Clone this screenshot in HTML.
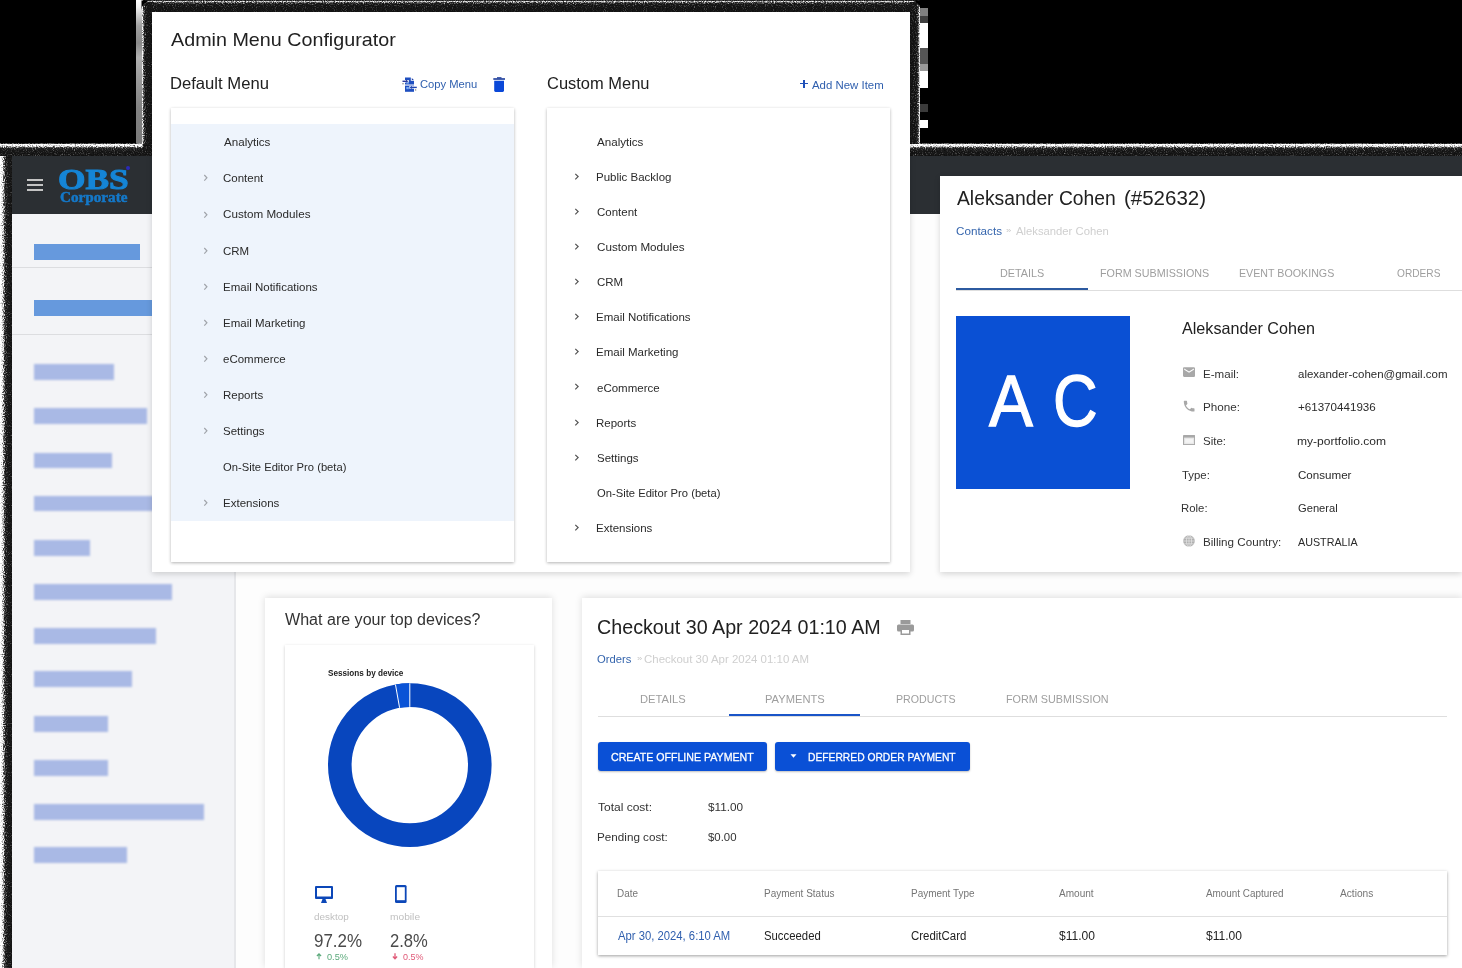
<!DOCTYPE html>
<html><head><meta charset="utf-8"><style>
html,body{margin:0;padding:0;}
body{width:1462px;height:968px;overflow:hidden;background:#000;position:relative;font-family:"Liberation Sans",sans-serif;}
.t{position:absolute;white-space:nowrap;transform-origin:0 0;}
.b{position:absolute;}
</style></head><body>
<div class="b" style="left:12.00px;top:156.00px;width:1450.00px;height:58.00px;background:#2b2f33"></div>
<div class="b" style="left:12.00px;top:214.00px;width:223.00px;height:754.00px;background:#f3f4f7"></div>
<div class="b" style="left:235.00px;top:214.00px;width:1227.00px;height:754.00px;background:#fdfdfd"></div>
<div class="b" style="left:234.00px;top:214.00px;width:2.00px;height:754.00px;background:#e6e7ea"></div>
<div class="b" style="left:26.60px;top:179.30px;width:16.80px;height:1.70px;background:#c4c4c4"></div>
<div class="b" style="left:26.60px;top:184.30px;width:16.80px;height:1.70px;background:#c4c4c4"></div>
<div class="b" style="left:26.60px;top:189.30px;width:16.80px;height:1.70px;background:#c4c4c4"></div>
<div class="t" style="left:57.68px;top:163.02px;font-size:29.361px;line-height:32.802px;color:#1585d6;font-weight:bold;font-family:'Liberation Serif', serif;transform:scaleX(1.2021);-webkit-text-stroke:1.0px #1585d6;">OBS</div>
<div class="t" style="left:59.96px;top:190.03px;font-size:13.663px;line-height:15.264px;color:#1478c8;font-weight:bold;font-family:'Liberation Serif', serif;transform:scaleX(1.1126);-webkit-text-stroke:0.5px #1478c8;">Corporate</div>
<div class="b" style="left:125.50px;top:165.50px;width:4.00px;height:4.00px;background:#2a2ab8;border-radius:50%"></div>
<div class="b" style="left:34.00px;top:244.00px;width:106.00px;height:16.00px;background:#6699dd"></div>
<div class="b" style="left:12.00px;top:267.00px;width:223.00px;height:1.00px;background:#dcdde0"></div>
<div class="b" style="left:34.00px;top:300.00px;width:201.00px;height:16.00px;background:#6699dd"></div>
<div class="b" style="left:12.00px;top:333.50px;width:223.00px;height:1.00px;background:#dcdde0"></div>
<div class="b" style="left:34.00px;top:364.00px;width:80.00px;height:15.50px;background:#a9b9e5;filter:blur(1px)"></div>
<div class="b" style="left:34.00px;top:408.00px;width:113.40px;height:15.50px;background:#a9b9e5;filter:blur(1px)"></div>
<div class="b" style="left:34.00px;top:452.60px;width:77.80px;height:15.50px;background:#a9b9e5;filter:blur(1px)"></div>
<div class="b" style="left:34.00px;top:495.50px;width:166.00px;height:15.50px;background:#a9b9e5;filter:blur(1px)"></div>
<div class="b" style="left:34.00px;top:540.00px;width:56.00px;height:15.50px;background:#a9b9e5;filter:blur(1px)"></div>
<div class="b" style="left:34.00px;top:584.20px;width:138.30px;height:15.50px;background:#a9b9e5;filter:blur(1px)"></div>
<div class="b" style="left:34.00px;top:628.00px;width:122.00px;height:15.50px;background:#a9b9e5;filter:blur(1px)"></div>
<div class="b" style="left:34.00px;top:671.00px;width:97.50px;height:15.50px;background:#a9b9e5;filter:blur(1px)"></div>
<div class="b" style="left:34.00px;top:716.30px;width:74.40px;height:15.50px;background:#a9b9e5;filter:blur(1px)"></div>
<div class="b" style="left:34.00px;top:760.00px;width:74.40px;height:15.50px;background:#a9b9e5;filter:blur(1px)"></div>
<div class="b" style="left:34.00px;top:804.00px;width:169.80px;height:15.50px;background:#a9b9e5;filter:blur(1px)"></div>
<div class="b" style="left:34.00px;top:847.30px;width:93.20px;height:15.50px;background:#a9b9e5;filter:blur(1px)"></div>
<div class="b" style="left:136.00px;top:0.00px;width:6.50px;height:144.00px;background:linear-gradient(#ffffff 0,#f0f0f0 5%,#a0a0a0 18%,#8a8a8a 30%,#b0b0b0 40%,#9a9a9a 55%,#828282 75%,#7a7a7a 100%)"></div>
<div class="b" style="left:920.00px;top:8.00px;width:8.00px;height:8.00px;background:#808080"></div>
<div class="b" style="left:920.00px;top:16.00px;width:8.00px;height:7.00px;background:#404040"></div>
<div class="b" style="left:920.00px;top:23.00px;width:8.00px;height:25.00px;background:#ffffff"></div>
<div class="b" style="left:920.00px;top:48.00px;width:8.00px;height:16.00px;background:#555555"></div>
<div class="b" style="left:920.00px;top:64.00px;width:8.00px;height:7.00px;background:#999999"></div>
<div class="b" style="left:920.00px;top:71.00px;width:8.00px;height:17.00px;background:#ffffff"></div>
<div class="b" style="left:920.00px;top:104.00px;width:8.00px;height:8.00px;background:#3a3a3a"></div>
<div class="b" style="left:920.00px;top:120.00px;width:8.00px;height:8.00px;background:#ffffff"></div>
<svg class="b" style="left:0;top:0" width="1462" height="968"><defs><filter id="dz" x="0" y="0" width="1462" height="968" filterUnits="userSpaceOnUse" color-interpolation-filters="sRGB"><feTurbulence type="fractalNoise" baseFrequency="0.9" numOctaves="1" seed="4" result="n"/><feColorMatrix in="n" type="matrix" values="1 0 0 0 0 1 0 0 0 0 1 0 0 0 0 0 0 0 0 1" result="ng"/><feComposite in="SourceGraphic" in2="ng" operator="arithmetic" k1="0" k2="1" k3="1.2" k4="-0.6" result="s"/><feComponentTransfer in="s" result="t"><feFuncR type="table" tableValues="0.07 0.11 0.3 0.75 1 1"/><feFuncG type="table" tableValues="0.07 0.11 0.3 0.75 1 1"/><feFuncB type="table" tableValues="0.07 0.11 0.3 0.75 1 1"/><feFuncA type="linear" slope="0" intercept="1"/></feComponentTransfer><feComposite in="t" in2="SourceAlpha" operator="in"/></filter><linearGradient id="gd" x1="0" y1="0" x2="0" y2="1"><stop offset="0" stop-color="#d0d0d0"/><stop offset="0.15" stop-color="#707070"/><stop offset="0.32" stop-color="#262626"/><stop offset="0.6" stop-color="#1a1a1a"/><stop offset="1" stop-color="#161616"/></linearGradient><linearGradient id="gr" x1="0" y1="0" x2="1" y2="0"><stop offset="0" stop-color="#d0d0d0"/><stop offset="0.15" stop-color="#707070"/><stop offset="0.32" stop-color="#262626"/><stop offset="0.6" stop-color="#1a1a1a"/><stop offset="1" stop-color="#161616"/></linearGradient><linearGradient id="gl" x1="1" y1="0" x2="0" y2="0"><stop offset="0" stop-color="#d0d0d0"/><stop offset="0.15" stop-color="#707070"/><stop offset="0.32" stop-color="#262626"/><stop offset="0.6" stop-color="#1a1a1a"/><stop offset="1" stop-color="#161616"/></linearGradient><linearGradient id="gd2" x1="0" y1="0" x2="0" y2="1"><stop offset="0" stop-color="#f4f4f4"/><stop offset="0.2" stop-color="#b8b8b8"/><stop offset="0.38" stop-color="#404040"/><stop offset="0.65" stop-color="#202020"/><stop offset="1" stop-color="#1a1a1a"/></linearGradient><linearGradient id="gr2" x1="0" y1="0" x2="1" y2="0"><stop offset="0" stop-color="#f4f4f4"/><stop offset="0.25" stop-color="#a8a8a8"/><stop offset="0.45" stop-color="#404040"/><stop offset="0.7" stop-color="#202020"/><stop offset="1" stop-color="#1a1a1a"/></linearGradient></defs><g filter="url(#dz)"><rect x="0" y="143.5" width="143" height="12.5" fill="url(#gd2)"/><rect x="920" y="143.5" width="542" height="12.5" fill="url(#gd2)"/><rect x="0" y="156" width="12" height="812" fill="url(#gr2)"/><rect x="143" y="0.5" width="777" height="11.5" fill="url(#gd)"/><rect x="142" y="2" width="10" height="142" fill="url(#gr)"/><rect x="910" y="2" width="10" height="142" fill="url(#gl)"/><rect x="143" y="144" width="9" height="12" fill="#1c1c1c"/><rect x="910" y="144" width="10" height="12" fill="url(#gd2)"/></g></svg>
<svg class="b" style="left:0;top:0" width="1462" height="200"><path d="M141.5 0.5H152A10 10 0 0 0 141.5 11z" fill="#000"/><path d="M920.5 0.5V12A10 10 0 0 0 910 0.5z" fill="#000"/></svg>
<div class="b" style="left:152.00px;top:12.00px;width:758.00px;height:560.00px;background:#ffffff;box-shadow:0 2px 6px rgba(0,0,0,0.16)"></div>
<div class="t" style="left:171.16px;top:29.06px;font-size:19.041px;line-height:21.272px;color:#212121;font-weight:normal;font-family:'Liberation Sans', sans-serif;transform:scaleX(1.0364);">Admin Menu Configurator</div>
<div class="t" style="left:169.64px;top:73.96px;font-size:16.279px;line-height:18.187px;color:#212121;font-weight:normal;font-family:'Liberation Sans', sans-serif;transform:scaleX(1.0221);">Default Menu</div>
<div class="t" style="left:420.33px;top:77.79px;font-size:11.163px;line-height:12.471px;color:#2f5fae;font-weight:normal;font-family:'Liberation Sans', sans-serif;transform:scaleX(1.0040);">Copy Menu</div>
<div class="t" style="left:546.96px;top:73.89px;font-size:16.134px;line-height:18.025px;color:#212121;font-weight:normal;font-family:'Liberation Sans', sans-serif;transform:scaleX(1.0209);">Custom Menu</div>
<div class="b" style="left:800.30px;top:82.90px;width:7.40px;height:1.60px;background:#1f50b8"></div>
<div class="b" style="left:803.20px;top:79.50px;width:1.60px;height:8.20px;background:#1f50b8"></div>
<div class="t" style="left:811.98px;top:78.57px;font-size:11.303px;line-height:12.627px;color:#2f5fae;font-weight:normal;font-family:'Liberation Sans', sans-serif;transform:scaleX(1.0112);">Add New Item</div>
<svg class="b" style="left:398px;top:74px" width="24" height="20" viewBox="0 0 24 20"><path d="M7 3.5h5.8v3.3h3.2v3.7h-9z" fill="#1f4fc0"/><path d="M13.8 3.9l2 2h-2z" fill="#1f3fa8"/><path d="M7 11.6h9v6.2h-9z" fill="#1f4fc0"/><path d="M4 7.3h6.8" stroke="#ffffff" stroke-width="2.6"/><path d="M4.5 7.3h4" stroke="#2a3a9a" stroke-width="1.4"/><path d="M8 5.6l2.3 1.7-2.3 1.7z" fill="#2a3a9a"/><path d="M11.3 13.4h7.8" stroke="#ffffff" stroke-width="2.6"/><path d="M13.2 13.4h5.6" stroke="#1f45b0" stroke-width="1.4"/><path d="M13.9 11.7l-2.3 1.7 2.3 1.7z" fill="#1f45b0"/><rect x="8.3" y="8.3" width="2.6" height="1.3" fill="#7aaaf0"/><rect x="8.3" y="13" width="2.5" height="2.2" fill="#7aaaf0"/><circle cx="5" cy="9.7" r="0.7" fill="#555" opacity="0.8"/><circle cx="17.6" cy="15.9" r="0.7" fill="#555" opacity="0.8"/></svg>
<svg class="b" style="left:488px;top:74px" width="24" height="20" viewBox="0 0 24 20"><path d="M5.3 4.2h11.7v1.6h-11.7z" fill="#1a3a9a"/><path d="M9 3.2h4.5v1.2h-4.5z" fill="#1a3a9a"/><path d="M6.2 6.8h9.8v9.8q0 1.3-1.3 1.3h-7.2q-1.3 0-1.3-1.3z" fill="#0a48d8"/></svg>
<div class="b" style="left:171.00px;top:108.00px;width:343.00px;height:454.00px;background:#ffffff;box-shadow:0 1px 3px rgba(0,0,0,0.3)"></div>
<div class="b" style="left:171.00px;top:124.00px;width:343.00px;height:396.50px;background:#eef4fc"></div>
<div class="t" style="left:223.58px;top:136.29px;font-size:11.163px;line-height:12.471px;color:#2a2a2a;font-weight:normal;font-family:'Liberation Sans', sans-serif;transform:scaleX(1.0397);">Analytics</div>
<div class="t" style="left:223.01px;top:208.45px;font-size:11.163px;line-height:12.471px;color:#2a2a2a;font-weight:normal;font-family:'Liberation Sans', sans-serif;transform:scaleX(1.0449);">Custom Modules</div>
<div class="t" style="left:223.07px;top:461.01px;font-size:11.163px;line-height:12.471px;color:#2a2a2a;font-weight:normal;font-family:'Liberation Sans', sans-serif;transform:scaleX(1.0056);">On-Site Editor Pro (beta)</div>
<div class="t" style="left:222.65px;top:497.09px;font-size:11.163px;line-height:12.471px;color:#2a2a2a;font-weight:normal;font-family:'Liberation Sans', sans-serif;transform:scaleX(1.0322);">Extensions</div>
<div class="t" style="left:223.02px;top:172.37px;font-size:11.163px;line-height:12.471px;color:#2a2a2a;font-weight:normal;font-family:'Liberation Sans', sans-serif;transform:scaleX(1.0306);">Content</div>
<svg class="b" style="left:203px;top:174.48px" width="6" height="8" viewBox="0 0 6 8"><path d="M1.3 1l2.6 2.8-2.6 2.8" fill="none" stroke="#a0a4aa" stroke-width="1.2"/></svg>
<svg class="b" style="left:203px;top:210.56px" width="6" height="8" viewBox="0 0 6 8"><path d="M1.3 1l2.6 2.8-2.6 2.8" fill="none" stroke="#a0a4aa" stroke-width="1.2"/></svg>
<div class="t" style="left:223.02px;top:244.53px;font-size:11.163px;line-height:12.471px;color:#2a2a2a;font-weight:normal;font-family:'Liberation Sans', sans-serif;transform:scaleX(1.0306);">CRM</div>
<svg class="b" style="left:203px;top:246.64px" width="6" height="8" viewBox="0 0 6 8"><path d="M1.3 1l2.6 2.8-2.6 2.8" fill="none" stroke="#a0a4aa" stroke-width="1.2"/></svg>
<div class="t" style="left:222.66px;top:280.61px;font-size:11.163px;line-height:12.471px;color:#2a2a2a;font-weight:normal;font-family:'Liberation Sans', sans-serif;transform:scaleX(1.0306);">Email Notifications</div>
<svg class="b" style="left:203px;top:282.72px" width="6" height="8" viewBox="0 0 6 8"><path d="M1.3 1l2.6 2.8-2.6 2.8" fill="none" stroke="#a0a4aa" stroke-width="1.2"/></svg>
<div class="t" style="left:222.66px;top:316.69px;font-size:11.163px;line-height:12.471px;color:#2a2a2a;font-weight:normal;font-family:'Liberation Sans', sans-serif;transform:scaleX(1.0306);">Email Marketing</div>
<svg class="b" style="left:203px;top:318.80px" width="6" height="8" viewBox="0 0 6 8"><path d="M1.3 1l2.6 2.8-2.6 2.8" fill="none" stroke="#a0a4aa" stroke-width="1.2"/></svg>
<div class="t" style="left:223.11px;top:352.77px;font-size:11.163px;line-height:12.471px;color:#2a2a2a;font-weight:normal;font-family:'Liberation Sans', sans-serif;transform:scaleX(1.0306);">eCommerce</div>
<svg class="b" style="left:203px;top:354.88px" width="6" height="8" viewBox="0 0 6 8"><path d="M1.3 1l2.6 2.8-2.6 2.8" fill="none" stroke="#a0a4aa" stroke-width="1.2"/></svg>
<div class="t" style="left:222.66px;top:388.85px;font-size:11.163px;line-height:12.471px;color:#2a2a2a;font-weight:normal;font-family:'Liberation Sans', sans-serif;transform:scaleX(1.0306);">Reports</div>
<svg class="b" style="left:203px;top:390.96px" width="6" height="8" viewBox="0 0 6 8"><path d="M1.3 1l2.6 2.8-2.6 2.8" fill="none" stroke="#a0a4aa" stroke-width="1.2"/></svg>
<div class="t" style="left:223.08px;top:424.93px;font-size:11.163px;line-height:12.471px;color:#2a2a2a;font-weight:normal;font-family:'Liberation Sans', sans-serif;transform:scaleX(1.0306);">Settings</div>
<svg class="b" style="left:203px;top:427.04px" width="6" height="8" viewBox="0 0 6 8"><path d="M1.3 1l2.6 2.8-2.6 2.8" fill="none" stroke="#a0a4aa" stroke-width="1.2"/></svg>
<svg class="b" style="left:203px;top:499.20px" width="6" height="8" viewBox="0 0 6 8"><path d="M1.3 1l2.6 2.8-2.6 2.8" fill="none" stroke="#a0a4aa" stroke-width="1.2"/></svg>
<div class="b" style="left:547.00px;top:108.00px;width:343.00px;height:454.00px;background:#ffffff;box-shadow:0 1px 3px rgba(0,0,0,0.3)"></div>
<div class="t" style="left:597.28px;top:135.59px;font-size:11.163px;line-height:12.471px;color:#2a2a2a;font-weight:normal;font-family:'Liberation Sans', sans-serif;transform:scaleX(1.0397);">Analytics</div>
<div class="t" style="left:596.36px;top:170.73px;font-size:11.163px;line-height:12.471px;color:#2a2a2a;font-weight:normal;font-family:'Liberation Sans', sans-serif;transform:scaleX(1.0306);">Public Backlog</div>
<svg class="b" style="left:574px;top:172.64px" width="6" height="8" viewBox="0 0 6 8"><path d="M1.3 0.9l2.8 2.7-2.8 2.8" fill="none" stroke="#555" stroke-width="1.25"/></svg>
<div class="t" style="left:596.72px;top:205.87px;font-size:11.163px;line-height:12.471px;color:#2a2a2a;font-weight:normal;font-family:'Liberation Sans', sans-serif;transform:scaleX(1.0306);">Content</div>
<svg class="b" style="left:574px;top:207.78px" width="6" height="8" viewBox="0 0 6 8"><path d="M1.3 0.9l2.8 2.7-2.8 2.8" fill="none" stroke="#555" stroke-width="1.25"/></svg>
<div class="t" style="left:596.71px;top:241.01px;font-size:11.163px;line-height:12.471px;color:#2a2a2a;font-weight:normal;font-family:'Liberation Sans', sans-serif;transform:scaleX(1.0449);">Custom Modules</div>
<svg class="b" style="left:574px;top:242.92px" width="6" height="8" viewBox="0 0 6 8"><path d="M1.3 0.9l2.8 2.7-2.8 2.8" fill="none" stroke="#555" stroke-width="1.25"/></svg>
<div class="t" style="left:596.72px;top:276.15px;font-size:11.163px;line-height:12.471px;color:#2a2a2a;font-weight:normal;font-family:'Liberation Sans', sans-serif;transform:scaleX(1.0306);">CRM</div>
<svg class="b" style="left:574px;top:278.06px" width="6" height="8" viewBox="0 0 6 8"><path d="M1.3 0.9l2.8 2.7-2.8 2.8" fill="none" stroke="#555" stroke-width="1.25"/></svg>
<div class="t" style="left:596.36px;top:311.29px;font-size:11.163px;line-height:12.471px;color:#2a2a2a;font-weight:normal;font-family:'Liberation Sans', sans-serif;transform:scaleX(1.0306);">Email Notifications</div>
<svg class="b" style="left:574px;top:313.20px" width="6" height="8" viewBox="0 0 6 8"><path d="M1.3 0.9l2.8 2.7-2.8 2.8" fill="none" stroke="#555" stroke-width="1.25"/></svg>
<div class="t" style="left:596.36px;top:346.43px;font-size:11.163px;line-height:12.471px;color:#2a2a2a;font-weight:normal;font-family:'Liberation Sans', sans-serif;transform:scaleX(1.0306);">Email Marketing</div>
<svg class="b" style="left:574px;top:348.34px" width="6" height="8" viewBox="0 0 6 8"><path d="M1.3 0.9l2.8 2.7-2.8 2.8" fill="none" stroke="#555" stroke-width="1.25"/></svg>
<div class="t" style="left:596.81px;top:381.57px;font-size:11.163px;line-height:12.471px;color:#2a2a2a;font-weight:normal;font-family:'Liberation Sans', sans-serif;transform:scaleX(1.0306);">eCommerce</div>
<svg class="b" style="left:574px;top:383.48px" width="6" height="8" viewBox="0 0 6 8"><path d="M1.3 0.9l2.8 2.7-2.8 2.8" fill="none" stroke="#555" stroke-width="1.25"/></svg>
<div class="t" style="left:596.36px;top:416.71px;font-size:11.163px;line-height:12.471px;color:#2a2a2a;font-weight:normal;font-family:'Liberation Sans', sans-serif;transform:scaleX(1.0306);">Reports</div>
<svg class="b" style="left:574px;top:418.62px" width="6" height="8" viewBox="0 0 6 8"><path d="M1.3 0.9l2.8 2.7-2.8 2.8" fill="none" stroke="#555" stroke-width="1.25"/></svg>
<div class="t" style="left:596.78px;top:451.85px;font-size:11.163px;line-height:12.471px;color:#2a2a2a;font-weight:normal;font-family:'Liberation Sans', sans-serif;transform:scaleX(1.0306);">Settings</div>
<svg class="b" style="left:574px;top:453.76px" width="6" height="8" viewBox="0 0 6 8"><path d="M1.3 0.9l2.8 2.7-2.8 2.8" fill="none" stroke="#555" stroke-width="1.25"/></svg>
<div class="t" style="left:596.77px;top:486.99px;font-size:11.163px;line-height:12.471px;color:#2a2a2a;font-weight:normal;font-family:'Liberation Sans', sans-serif;transform:scaleX(1.0056);">On-Site Editor Pro (beta)</div>
<div class="t" style="left:596.35px;top:522.13px;font-size:11.163px;line-height:12.471px;color:#2a2a2a;font-weight:normal;font-family:'Liberation Sans', sans-serif;transform:scaleX(1.0322);">Extensions</div>
<svg class="b" style="left:574px;top:524.04px" width="6" height="8" viewBox="0 0 6 8"><path d="M1.3 0.9l2.8 2.7-2.8 2.8" fill="none" stroke="#555" stroke-width="1.25"/></svg>
<div class="b" style="left:940.00px;top:176.00px;width:522.00px;height:396.00px;background:#ffffff;box-shadow:0 2px 6px rgba(0,0,0,0.16)"></div>
<div class="t" style="left:956.96px;top:188.40px;font-size:19.332px;line-height:21.597px;color:#212121;font-weight:normal;font-family:'Liberation Sans', sans-serif;transform:scaleX(0.9983);">Aleksander Cohen</div>
<div class="t" style="left:1123.73px;top:188.40px;font-size:19.332px;line-height:21.597px;color:#212121;font-weight:normal;font-family:'Liberation Sans', sans-serif;transform:scaleX(1.0602);">(#52632)</div>
<div class="t" style="left:956.41px;top:224.97px;font-size:11.303px;line-height:12.627px;color:#3565ad;font-weight:normal;font-family:'Liberation Sans', sans-serif;transform:scaleX(1.0316);">Contacts</div>
<div class="t" style="left:1006.12px;top:226.58px;font-size:6.977px;line-height:7.794px;color:#c8c8c8;font-weight:normal;font-family:'Liberation Sans', sans-serif;transform:scaleX(1.3576);">»</div>
<div class="t" style="left:1015.98px;top:224.97px;font-size:11.303px;line-height:12.627px;color:#cfcfcf;font-weight:normal;font-family:'Liberation Sans', sans-serif;transform:scaleX(0.9974);">Aleksander Cohen</div>
<div class="t" style="left:999.81px;top:267.70px;font-size:10.605px;line-height:11.848px;color:#9e9e9e;font-weight:normal;font-family:'Liberation Sans', sans-serif;transform:scaleX(1.0224);">DETAILS</div>
<div class="t" style="left:1100.02px;top:267.70px;font-size:10.605px;line-height:11.848px;color:#9e9e9e;font-weight:normal;font-family:'Liberation Sans', sans-serif;transform:scaleX(1.0144);">FORM SUBMISSIONS</div>
<div class="t" style="left:1239.42px;top:267.70px;font-size:10.605px;line-height:11.848px;color:#9e9e9e;font-weight:normal;font-family:'Liberation Sans', sans-serif;transform:scaleX(1.0072);">EVENT BOOKINGS</div>
<div class="t" style="left:1397.12px;top:267.70px;font-size:10.605px;line-height:11.848px;color:#9e9e9e;font-weight:normal;font-family:'Liberation Sans', sans-serif;transform:scaleX(0.9576);">ORDERS</div>
<div class="b" style="left:956.00px;top:289.50px;width:506.00px;height:1.00px;background:#dedede"></div>
<div class="b" style="left:956.00px;top:287.50px;width:132.00px;height:2.00px;background:#2c5aa0"></div>
<div class="b" style="left:956.00px;top:316.00px;width:174.00px;height:173.00px;background:#0a50d4"></div>
<div class="t" style="left:989.07px;top:360.01px;font-size:73.112px;line-height:81.679px;color:#ffffff;font-weight:normal;font-family:'Liberation Sans', sans-serif;transform:scaleX(0.8993);-webkit-text-stroke:1.3px #ffffff;">A</div>
<div class="t" style="left:1053.16px;top:360.01px;font-size:73.112px;line-height:81.679px;color:#ffffff;font-weight:normal;font-family:'Liberation Sans', sans-serif;transform:scaleX(0.8445);-webkit-text-stroke:1.3px #ffffff;">C</div>
<div class="t" style="left:1182.37px;top:318.86px;font-size:16.279px;line-height:18.187px;color:#212121;font-weight:normal;font-family:'Liberation Sans', sans-serif;transform:scaleX(0.9936);">Aleksander Cohen</div>
<div class="t" style="left:1202.55px;top:367.79px;font-size:11.163px;line-height:12.471px;color:#333333;font-weight:normal;font-family:'Liberation Sans', sans-serif;transform:scaleX(1.0367);">E-mail:</div>
<div class="t" style="left:1297.71px;top:367.79px;font-size:11.163px;line-height:12.471px;color:#2a2a2a;font-weight:normal;font-family:'Liberation Sans', sans-serif;transform:scaleX(1.0295);">alexander-cohen@gmail.com</div>
<div class="t" style="left:1202.54px;top:401.45px;font-size:11.163px;line-height:12.471px;color:#333333;font-weight:normal;font-family:'Liberation Sans', sans-serif;transform:scaleX(1.0465);">Phone:</div>
<div class="t" style="left:1297.63px;top:401.45px;font-size:11.163px;line-height:12.471px;color:#2a2a2a;font-weight:normal;font-family:'Liberation Sans', sans-serif;transform:scaleX(1.0396);">+61370441936</div>
<div class="t" style="left:1202.98px;top:435.11px;font-size:11.163px;line-height:12.471px;color:#333333;font-weight:normal;font-family:'Liberation Sans', sans-serif;transform:scaleX(1.0331);">Site:</div>
<div class="t" style="left:1297.40px;top:435.11px;font-size:11.163px;line-height:12.471px;color:#2a2a2a;font-weight:normal;font-family:'Liberation Sans', sans-serif;transform:scaleX(1.0799);">my-portfolio.com</div>
<div class="t" style="left:1182.14px;top:468.77px;font-size:11.163px;line-height:12.471px;color:#333333;font-weight:normal;font-family:'Liberation Sans', sans-serif;transform:scaleX(1.0218);">Type:</div>
<div class="t" style="left:1297.61px;top:468.77px;font-size:11.163px;line-height:12.471px;color:#2a2a2a;font-weight:normal;font-family:'Liberation Sans', sans-serif;transform:scaleX(1.0386);">Consumer</div>
<div class="t" style="left:1181.47px;top:502.43px;font-size:11.163px;line-height:12.471px;color:#333333;font-weight:normal;font-family:'Liberation Sans', sans-serif;transform:scaleX(1.0197);">Role:</div>
<div class="t" style="left:1297.64px;top:502.43px;font-size:11.163px;line-height:12.471px;color:#2a2a2a;font-weight:normal;font-family:'Liberation Sans', sans-serif;transform:scaleX(0.9999);">General</div>
<div class="t" style="left:1202.54px;top:536.09px;font-size:11.163px;line-height:12.471px;color:#333333;font-weight:normal;font-family:'Liberation Sans', sans-serif;transform:scaleX(1.0432);">Billing Country:</div>
<div class="t" style="left:1298.18px;top:536.09px;font-size:11.163px;line-height:12.471px;color:#2a2a2a;font-weight:normal;font-family:'Liberation Sans', sans-serif;transform:scaleX(0.9630);">AUSTRALIA</div>
<svg class="b" style="left:1183.1px;top:367px" width="12.1" height="10.2" viewBox="2 4 20 16"><path fill="#a8a8a8" d="M20 4H4c-1.1 0-2 .9-2 2v12c0 1.1.9 2 2 2h16c1.1 0 2-.9 2-2V6c0-1.1-.9-2-2-2zm0 4l-8 5-8-5V6l8 5 8-5v2z"/></svg>
<svg class="b" style="left:1182.2px;top:398.7px" width="14.3" height="14.3" viewBox="0 0 24 24"><path fill="#a8a8a8" d="M6.62 10.79c1.44 2.83 3.76 5.14 6.59 6.59l2.2-2.2c.27-.27.67-.36 1.02-.24 1.12.37 2.33.57 3.57.57.55 0 1 .45 1 1V20c0 .55-.45 1-1 1-9.39 0-17-7.61-17-17 0-.55.45-1 1-1h3.5c.55 0 1 .45 1 1 0 1.25.2 2.45.57 3.57.11.35.03.74-.25 1.02l-2.2 2.2z"/></svg>
<svg class="b" style="left:1183px;top:435px" width="12.2" height="10.2" viewBox="0 0 12.2 10.2"><rect x="0" y="0" width="12.2" height="10.2" rx="0.8" fill="#a8a8a8"/><rect x="1.1" y="2.6" width="10" height="6.5" fill="#e8e8e8"/><rect x="2.2" y="4" width="7.8" height="3.8" fill="#f4f4f4"/></svg>
<svg class="b" style="left:1183px;top:535.4px" width="12" height="12" viewBox="0 0 12 12"><circle cx="6" cy="6" r="5.8" fill="#b0b0b0"/><path d="M0.3 6h11.4M6 0.3v11.4M1.3 3.2h9.4M1.3 8.8h9.4" stroke="#eeeeee" stroke-width="0.6" fill="none"/><ellipse cx="6" cy="6" rx="2.6" ry="5.8" fill="none" stroke="#eeeeee" stroke-width="0.6"/></svg>
<div class="b" style="left:265.00px;top:598.00px;width:287.00px;height:370.00px;background:#ffffff;box-shadow:0 -1px 7px rgba(0,0,0,0.13)"></div>
<div class="t" style="left:285.23px;top:610.96px;font-size:15.843px;line-height:17.700px;color:#333333;font-weight:normal;font-family:'Liberation Sans', sans-serif;transform:scaleX(1.0146);">What are your top devices?</div>
<div class="b" style="left:285.00px;top:645.00px;width:249.00px;height:323.00px;background:#ffffff;box-shadow:0 1px 3px rgba(0,0,0,0.2)"></div>
<div class="t" style="left:327.66px;top:667.54px;font-size:9.012px;line-height:10.068px;color:#222222;font-weight:bold;font-family:'Liberation Sans', sans-serif;transform:scaleX(0.9082);">Sessions by device</div>
<svg class="b" style="left:0;top:0" width="1462" height="968"><circle cx="409.80" cy="765.10" r="70.00" fill="none" stroke="#0846be" stroke-width="23.60"/><path d="M395.46 684.57 A81.80 81.80 0 0 1 409.80 683.30 L409.80 706.90 A58.20 58.20 0 0 0 399.59 707.80 Z" fill="#0a53d6"/><line x1="409.80" y1="683.30" x2="409.80" y2="706.90" stroke="#fff" stroke-width="1"/><line x1="395.46" y1="684.57" x2="399.59" y2="707.80" stroke="#fff" stroke-width="1"/></svg>
<svg class="b" style="left:315px;top:886px" width="18" height="17" viewBox="0 0 18 17"><rect x="0" y="0" width="18" height="13" rx="1" fill="#0c47b8"/><rect x="2" y="2" width="14" height="8.5" fill="#ffffff"/><path d="M6 17l1.5-4h3l1.5 4z" fill="#0c47b8"/></svg>
<svg class="b" style="left:394.6px;top:885.4px" width="12" height="18" viewBox="0 0 12 18"><rect x="0" y="0" width="11.6" height="18" rx="1.5" fill="#0c47b8"/><rect x="1.8" y="2.2" width="8" height="13" fill="#ffffff"/></svg>
<div class="t" style="left:314.48px;top:912.36px;font-size:9.209px;line-height:10.289px;color:#c0c0c0;font-weight:normal;font-family:'Liberation Sans', sans-serif;transform:scaleX(1.0800);">desktop</div>
<div class="t" style="left:390.12px;top:912.36px;font-size:9.209px;line-height:10.289px;color:#c0c0c0;font-weight:normal;font-family:'Liberation Sans', sans-serif;transform:scaleX(1.1107);">mobile</div>
<div class="t" style="left:314.10px;top:931.18px;font-size:18.024px;line-height:20.136px;color:#4a4a4a;font-weight:normal;font-family:'Liberation Sans', sans-serif;transform:scaleX(0.9412);">97.2%</div>
<div class="t" style="left:390.47px;top:931.18px;font-size:18.024px;line-height:20.136px;color:#4a4a4a;font-weight:normal;font-family:'Liberation Sans', sans-serif;transform:scaleX(0.9208);">2.8%</div>
<svg class="b" style="left:315.5px;top:953.2px" width="6" height="6.5" viewBox="0 0 6 6.5"><path d="M3 6.3V0.9M0.9 3l2.1-2.2L5.1 3" fill="none" stroke="#5aa97a" stroke-width="1.1"/></svg>
<div class="t" style="left:326.54px;top:951.86px;font-size:9.768px;line-height:10.912px;color:#5aa97a;font-weight:normal;font-family:'Liberation Sans', sans-serif;transform:scaleX(0.9427);">0.5%</div>
<svg class="b" style="left:391.8px;top:953.2px" width="6" height="6.5" viewBox="0 0 6 6.5"><path d="M3 0.2V5.6M0.9 3.5l2.1 2.2L5.1 3.5" fill="none" stroke="#e05a78" stroke-width="1.3"/></svg>
<div class="t" style="left:402.75px;top:951.86px;font-size:9.768px;line-height:10.912px;color:#e05a78;font-weight:normal;font-family:'Liberation Sans', sans-serif;transform:scaleX(0.9195);">0.5%</div>
<div class="b" style="left:582.00px;top:598.00px;width:880.00px;height:370.00px;background:#ffffff;box-shadow:0 -1px 7px rgba(0,0,0,0.13)"></div>
<div class="t" style="left:597.10px;top:615.68px;font-size:20.349px;line-height:22.734px;color:#212121;font-weight:normal;font-family:'Liberation Sans', sans-serif;transform:scaleX(0.9693);">Checkout 30 Apr 2024 01:10 AM</div>
<svg class="b" style="left:897px;top:620px" width="17" height="15" viewBox="0 0 17 15"><rect x="3.5" y="0" width="10" height="4" fill="#9a9a9a"/><rect x="0" y="4.5" width="17" height="7" rx="1.5" fill="#9a9a9a"/><rect x="3.5" y="9" width="10" height="6" fill="#9a9a9a"/><rect x="5" y="10" width="7" height="3.5" fill="#ffffff"/></svg>
<div class="t" style="left:597.47px;top:652.87px;font-size:11.303px;line-height:12.627px;color:#3565ad;font-weight:normal;font-family:'Liberation Sans', sans-serif;transform:scaleX(0.9941);">Orders</div>
<div class="t" style="left:636.62px;top:654.58px;font-size:6.977px;line-height:7.794px;color:#c8c8c8;font-weight:normal;font-family:'Liberation Sans', sans-serif;transform:scaleX(1.3576);">»</div>
<div class="t" style="left:644.42px;top:652.87px;font-size:11.303px;line-height:12.627px;color:#cfcfcf;font-weight:normal;font-family:'Liberation Sans', sans-serif;transform:scaleX(1.0146);">Checkout 30 Apr 2024 01:10 AM</div>
<div class="t" style="left:640.08px;top:693.70px;font-size:10.605px;line-height:11.848px;color:#9e9e9e;font-weight:normal;font-family:'Liberation Sans', sans-serif;transform:scaleX(1.0533);">DETAILS</div>
<div class="t" style="left:764.58px;top:693.70px;font-size:10.605px;line-height:11.848px;color:#9e9e9e;font-weight:normal;font-family:'Liberation Sans', sans-serif;transform:scaleX(1.0540);">PAYMENTS</div>
<div class="t" style="left:895.73px;top:693.70px;font-size:10.605px;line-height:11.848px;color:#9e9e9e;font-weight:normal;font-family:'Liberation Sans', sans-serif;transform:scaleX(1.0043);">PRODUCTS</div>
<div class="t" style="left:1005.81px;top:693.70px;font-size:10.605px;line-height:11.848px;color:#9e9e9e;font-weight:normal;font-family:'Liberation Sans', sans-serif;transform:scaleX(1.0200);">FORM SUBMISSION</div>
<div class="b" style="left:598.00px;top:715.50px;width:849.00px;height:1.00px;background:#dedede"></div>
<div class="b" style="left:728.50px;top:713.50px;width:131.90px;height:2.00px;background:#1a55c8"></div>
<div class="b" style="left:597.90px;top:741.80px;width:168.80px;height:29.10px;background:#0a50d6;border-radius:3px;box-shadow:0 1px 2px rgba(0,0,0,0.25)"></div>
<div class="t" style="left:610.76px;top:749.99px;font-size:11.721px;line-height:13.095px;color:#ffffff;font-weight:normal;font-family:'Liberation Sans', sans-serif;transform:scaleX(0.9060);-webkit-text-stroke:0.3px #ffffff;">CREATE OFFLINE PAYMENT</div>
<div class="b" style="left:775.30px;top:741.80px;width:194.50px;height:29.10px;background:#0a50d6;border-radius:3px;box-shadow:0 1px 2px rgba(0,0,0,0.25)"></div>
<svg class="b" style="left:790px;top:754px" width="7" height="4" viewBox="0 0 7 4"><path d="M0.5 0.3h6l-3 3.5z" fill="#ffffff"/></svg>
<div class="t" style="left:807.86px;top:749.99px;font-size:11.721px;line-height:13.095px;color:#ffffff;font-weight:normal;font-family:'Liberation Sans', sans-serif;transform:scaleX(0.8778);-webkit-text-stroke:0.3px #ffffff;">DEFERRED ORDER PAYMENT</div>
<div class="t" style="left:598.03px;top:801.47px;font-size:11.303px;line-height:12.627px;color:#333333;font-weight:normal;font-family:'Liberation Sans', sans-serif;transform:scaleX(1.0626);">Total cost:</div>
<div class="t" style="left:708.37px;top:801.47px;font-size:11.303px;line-height:12.627px;color:#333333;font-weight:normal;font-family:'Liberation Sans', sans-serif;transform:scaleX(1.0402);">$11.00</div>
<div class="t" style="left:597.04px;top:831.17px;font-size:11.303px;line-height:12.627px;color:#333333;font-weight:normal;font-family:'Liberation Sans', sans-serif;transform:scaleX(1.0341);">Pending cost:</div>
<div class="t" style="left:708.38px;top:831.17px;font-size:11.303px;line-height:12.627px;color:#333333;font-weight:normal;font-family:'Liberation Sans', sans-serif;transform:scaleX(1.0101);">$0.00</div>
<div class="b" style="left:598.00px;top:870.60px;width:849.00px;height:84.80px;background:#ffffff;box-shadow:0 1px 3px rgba(0,0,0,0.38)"></div>
<div class="b" style="left:598.00px;top:915.70px;width:849.00px;height:1.00px;background:#e0e0e0"></div>
<div class="t" style="left:616.79px;top:887.81px;font-size:10.047px;line-height:11.224px;color:#757575;font-weight:normal;font-family:'Liberation Sans', sans-serif;transform:scaleX(0.9874);">Date</div>
<div class="t" style="left:763.68px;top:887.81px;font-size:10.047px;line-height:11.224px;color:#757575;font-weight:normal;font-family:'Liberation Sans', sans-serif;transform:scaleX(0.9952);">Payment Status</div>
<div class="t" style="left:910.68px;top:887.81px;font-size:10.047px;line-height:11.224px;color:#757575;font-weight:normal;font-family:'Liberation Sans', sans-serif;transform:scaleX(0.9925);">Payment Type</div>
<div class="t" style="left:1058.78px;top:887.81px;font-size:10.047px;line-height:11.224px;color:#757575;font-weight:normal;font-family:'Liberation Sans', sans-serif;transform:scaleX(1.0020);">Amount</div>
<div class="t" style="left:1206.38px;top:887.81px;font-size:10.047px;line-height:11.224px;color:#757575;font-weight:normal;font-family:'Liberation Sans', sans-serif;transform:scaleX(0.9862);">Amount Captured</div>
<div class="t" style="left:1340.18px;top:887.81px;font-size:10.047px;line-height:11.224px;color:#757575;font-weight:normal;font-family:'Liberation Sans', sans-serif;transform:scaleX(1.0134);">Actions</div>
<div class="t" style="left:617.58px;top:929.66px;font-size:11.861px;line-height:13.251px;color:#2f5fae;font-weight:normal;font-family:'Liberation Sans', sans-serif;transform:scaleX(0.9510);">Apr 30, 2024, 6:10 AM</div>
<div class="t" style="left:763.99px;top:929.66px;font-size:11.861px;line-height:13.251px;color:#222222;font-weight:normal;font-family:'Liberation Sans', sans-serif;transform:scaleX(0.9561);">Succeeded</div>
<div class="t" style="left:910.92px;top:929.66px;font-size:11.861px;line-height:13.251px;color:#222222;font-weight:normal;font-family:'Liberation Sans', sans-serif;transform:scaleX(0.9646);">CreditCard</div>
<div class="t" style="left:1058.67px;top:929.66px;font-size:11.861px;line-height:13.251px;color:#222222;font-weight:normal;font-family:'Liberation Sans', sans-serif;transform:scaleX(1.0171);">$11.00</div>
<div class="t" style="left:1206.27px;top:929.66px;font-size:11.861px;line-height:13.251px;color:#222222;font-weight:normal;font-family:'Liberation Sans', sans-serif;transform:scaleX(1.0171);">$11.00</div>
</body></html>
